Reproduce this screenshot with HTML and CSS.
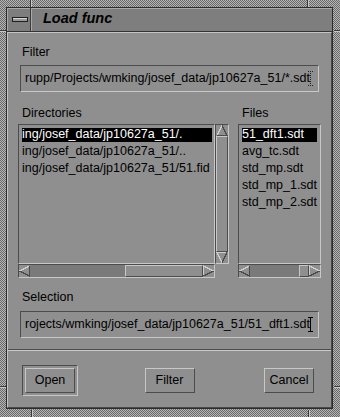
FILE: index.html
```html
<!DOCTYPE html>
<html lang="en">
<head>
    <meta charset="UTF-8">
    <title>Load func</title>
    <link rel="stylesheet" href="styles.css">
</head>
<body>
    <div class="window">
        <!-- resize handle notches in the frame -->
        <span class="notch notch-v" style="left: 30px; top: 0;"></span>
        <span class="notch notch-v" style="left: 307px; top: 0;"></span>
        <span class="notch notch-v" style="left: 31px; bottom: 0;"></span>
        <span class="notch notch-v" style="left: 308px; bottom: 0;"></span>
        <span class="notch notch-h" style="left: 0; top: 30px;"></span>
        <span class="notch notch-h" style="left: 0; top: 386px;"></span>
        <span class="notch notch-h" style="right: 0; top: 30px;"></span>
        <span class="notch notch-h" style="right: 0; top: 386px;"></span>

        <div class="frame">
            <div class="titlebar">
                <div class="menu-btn"><span class="menu-bar"></span></div>
                <div class="title">Load func</div>
            </div>

            <div class="client">
                <div class="work">
                    <div class="label">Filter</div>
                    <div class="field">
                        <span class="field-text">rupp/Projects/wmking/josef_data/jp10627a_51/*.sdt</span>
                        <svg class="cursor" width="5" height="15" viewBox="0 0 5 15">
                            <path d="M0 0.5H5M0 14.5H5M2.5 0V15" stroke="#222" stroke-width="1" stroke-dasharray="1 1" fill="none"/>
                        </svg>
                    </div>

                    <div class="lists">
                        <div class="dir-col">
                            <div class="label">Directories</div>
                            <div class="scrolled">
                                <div class="scrolled-top">
                                    <div class="list dir-list">
                                        <div class="item selected">ing/josef_data/jp10627a_51/.</div>
                                        <div class="item">ing/josef_data/jp10627a_51/..</div>
                                        <div class="item">ing/josef_data/jp10627a_51/51.fid</div>
                                    </div>
                                    <div class="vscroll">
                                        <svg class="arrow" width="12" height="11" viewBox="0 0 12 11">
                                            <path d="M1 10.5L6 0.5" stroke="#cfcfcf" fill="none"/>
                                            <path d="M6 0.5L11 10.5H1" stroke="#4a4a4a" fill="none"/>
                                        </svg>
                                        <div class="slider slider-v"></div>
                                        <svg class="arrow" width="12" height="11" viewBox="0 0 12 11">
                                            <path d="M6 10.5L1 0.5H11" stroke="#cfcfcf" fill="none"/>
                                            <path d="M11 0.5L6 10.5" stroke="#4a4a4a" fill="none"/>
                                        </svg>
                                    </div>
                                </div>
                                <div class="hscroll dir-h">
                                    <svg class="arrow" width="11" height="12" viewBox="0 0 11 12">
                                        <path d="M0.5 6L10.5 1" stroke="#cfcfcf" fill="none"/>
                                        <path d="M10.5 1V11L0.5 6" stroke="#4a4a4a" fill="none"/>
                                    </svg>
                                    <div class="trough"></div>
                                    <div class="slider slider-h dir-slider"></div>
                                    <svg class="arrow" width="11" height="12" viewBox="0 0 11 12">
                                        <path d="M0.5 11V1L10.5 6" stroke="#cfcfcf" fill="none"/>
                                        <path d="M10.5 6L0.5 11" stroke="#4a4a4a" fill="none"/>
                                    </svg>
                                </div>
                            </div>
                        </div>

                        <div class="files-col">
                            <div class="label">Files</div>
                            <div class="scrolled">
                                <div class="list files-list">
                                    <div class="item selected">51_dft1.sdt</div>
                                    <div class="item">avg_tc.sdt</div>
                                    <div class="item">std_mp.sdt</div>
                                    <div class="item">std_mp_1.sdt</div>
                                    <div class="item">std_mp_2.sdt</div>
                                </div>
                                <div class="hscroll files-h">
                                    <svg class="arrow" width="11" height="12" viewBox="0 0 11 12">
                                        <path d="M0.5 6L10.5 1" stroke="#cfcfcf" fill="none"/>
                                        <path d="M10.5 1V11L0.5 6" stroke="#4a4a4a" fill="none"/>
                                    </svg>
                                    <div class="trough"></div>
                                    <div class="slider slider-h files-slider"></div>
                                    <svg class="arrow" width="11" height="12" viewBox="0 0 11 12">
                                        <path d="M0.5 11V1L10.5 6" stroke="#cfcfcf" fill="none"/>
                                        <path d="M10.5 6L0.5 11" stroke="#4a4a4a" fill="none"/>
                                    </svg>
                                </div>
                            </div>
                        </div>
                    </div>

                    <div class="label label-sel">Selection</div>
                    <div class="field">
                        <span class="field-text">rojects/wmking/josef_data/jp10627a_51/51_dft1.sdt</span>
                        <svg class="cursor" width="5" height="15" viewBox="0 0 5 15">
                            <path d="M0 0.5H5M0 14.5H5M2.5 0V15" stroke="#000" stroke-width="1" fill="none"/>
                        </svg>
                    </div>
                </div>

                <div class="sep"></div>

                <div class="actions">
                    <div class="slot default"><div class="button">Open</div></div>
                    <div class="slot"><div class="button">Filter</div></div>
                    <div class="slot"><div class="button">Cancel</div></div>
                </div>
            </div>
        </div>
    </div>
</body>
</html>
```

FILE: styles.css
```css
/* page */
body {
    margin: 0;
    font-family: "Liberation Sans", Arial, sans-serif;
    font-size: 12.5px;
    color: #000;
    background: #8f8f8f;
}

/* window manager frame (stippled) */
.window {
    position: relative;
    width: 340px;
    height: 417px;
    box-sizing: border-box;
    padding: 7px 7px 8px 6px;
    background-color: #8c8c8c;
    background-image: repeating-conic-gradient(#b6b6b6 0 25%, #686868 0 50%);
    background-size: 2px 2px;
}

.notch {
    position: absolute;
    background: #3a3a3a;
}

.notch-v {
    width: 1px;
    height: 7px;
    box-shadow: 1px 0 0 #c8c8c8;
}

.notch-h {
    width: 6px;
    height: 1px;
    box-shadow: 0 1px 0 #c8c8c8;
}

.frame {
    height: 100%;
    box-sizing: border-box;
    border: 1px solid #2c2c2c;
    display: flex;
    flex-direction: column;
}

/* title bar */
.titlebar {
    height: 23px;
    display: flex;
    background: #7e7e7e;
    border-bottom: 1px solid #333;
}

.menu-btn {
    width: 23px;
    border-right: 1px solid #3a3a3a;
    box-shadow: inset 1px 1px 0 #a9a9a9;
    display: flex;
    align-items: center;
    justify-content: center;
}

.menu-bar {
    width: 14px;
    height: 3px;
    border: 1px solid #1e1e1e;
    background: linear-gradient(#d6d6d6 0 50%, #9a9a9a 50%);
    margin-left: 2px;
}

.title {
    flex: 1;
    box-shadow: inset 1px 1px 0 #a9a9a9;
    padding-left: 12px;
    line-height: 21px;
    font-size: 14.5px;
    font-weight: bold;
    font-style: italic;
    color: #000;
}

/* dialog body */
.client {
    flex: 1;
    display: flex;
    flex-direction: column;
    background: #8f8f8f;
    border-top: 1px solid #c4c4c4;
    border-left: 1px solid #c4c4c4;
    border-right: 1px solid #4a4a4a;
    border-bottom: 1px solid #4a4a4a;
}

.work {
    padding: 12px 10px 11px;
}

.label {
    height: 15px;
    line-height: 15px;
    padding-left: 4px;
    white-space: nowrap;
}

/* text fields */
.field {
    height: 25px;
    margin: 5px 2px 0;
    border-top: 1px solid #4c4c4c;
    border-left: 1px solid #4c4c4c;
    border-right: 1px solid #c8c8c8;
    border-bottom: 1px solid #c8c8c8;
    padding-left: 4px;
    line-height: 25px;
    white-space: nowrap;
    overflow: hidden;
    display: flex;
    align-items: center;
}

.field-text {
    flex: none;
}

.cursor {
    flex: none;
    margin-left: -2px;
}

.label-sel {
    margin-top: 12px;
}

.label-sel + .field {
    margin-top: 6px;
}

/* lists */
.lists {
    display: flex;
    gap: 9px;
    margin-top: 14px;
}

.dir-col {
    width: 211px;
}

.files-col {
    flex: 1;
}

.scrolled {
    margin-top: 3px;
}

.scrolled-top {
    display: flex;
}

.list {
    height: 134px;
    box-sizing: content-box;
    padding: 3px 2px 1px 3px;
    border-top: 1px solid #4c4c4c;
    border-left: 1px solid #4c4c4c;
    border-right: 1px solid #c8c8c8;
    border-bottom: 1px solid #c8c8c8;
    overflow: hidden;
}

.dir-list {
    width: 192px;
}

.files-list {
    padding-right: 3px;
}

.item {
    height: 14px;
    line-height: 13px;
    margin-bottom: 3px;
    white-space: nowrap;
}

.item.selected {
    background: #000;
    color: #fff;
}

/* scrollbars */
.vscroll {
    width: 12px;
    height: 138px;
    display: flex;
    flex-direction: column;
    background: #7a7a7a;
    border-top: 1px solid #4c4c4c;
    border-left: 1px solid #4c4c4c;
    border-right: 1px solid #c8c8c8;
    border-bottom: 1px solid #c8c8c8;
}

.hscroll {
    height: 12px;
    display: flex;
    background: #7a7a7a;
    border-top: 1px solid #4c4c4c;
    border-left: 1px solid #4c4c4c;
    border-right: 1px solid #c8c8c8;
    border-bottom: 1px solid #c8c8c8;
}

.dir-h {
    width: 195px;
}

.arrow {
    display: block;
    flex: none;
    background: #8f8f8f;
    shape-rendering: crispEdges;
}

.trough {
    flex: 1;
}

.slider {
    box-sizing: border-box;
    background: #8f8f8f;
    border-top: 1px solid #c8c8c8;
    border-left: 1px solid #c8c8c8;
    border-right: 1px solid #4c4c4c;
    border-bottom: 1px solid #4c4c4c;
}

.slider-v {
    flex: 1;
}

.dir-slider {
    width: 78px;
}

.files-slider {
    width: 10px;
}

/* separator and buttons */
.sep {
    height: 1px;
    background: #4c4c4c;
    border-bottom: 1px solid #c8c8c8;
}

.actions {
    display: flex;
    justify-content: space-between;
    padding: 14px 14px 0;
}

.slot {
    width: 56px;
    height: 31px;
    box-sizing: border-box;
    padding: 3px;
}

.slot.default {
    border-top: 1px solid #4c4c4c;
    border-left: 1px solid #4c4c4c;
    border-right: 1px solid #c8c8c8;
    border-bottom: 1px solid #c8c8c8;
    padding: 2px;
}

.button {
    height: 25px;
    box-sizing: border-box;
    border-top: 1px solid #c8c8c8;
    border-left: 1px solid #c8c8c8;
    border-right: 1px solid #4c4c4c;
    border-bottom: 1px solid #4c4c4c;
    text-align: center;
    line-height: 23px;
}
```
